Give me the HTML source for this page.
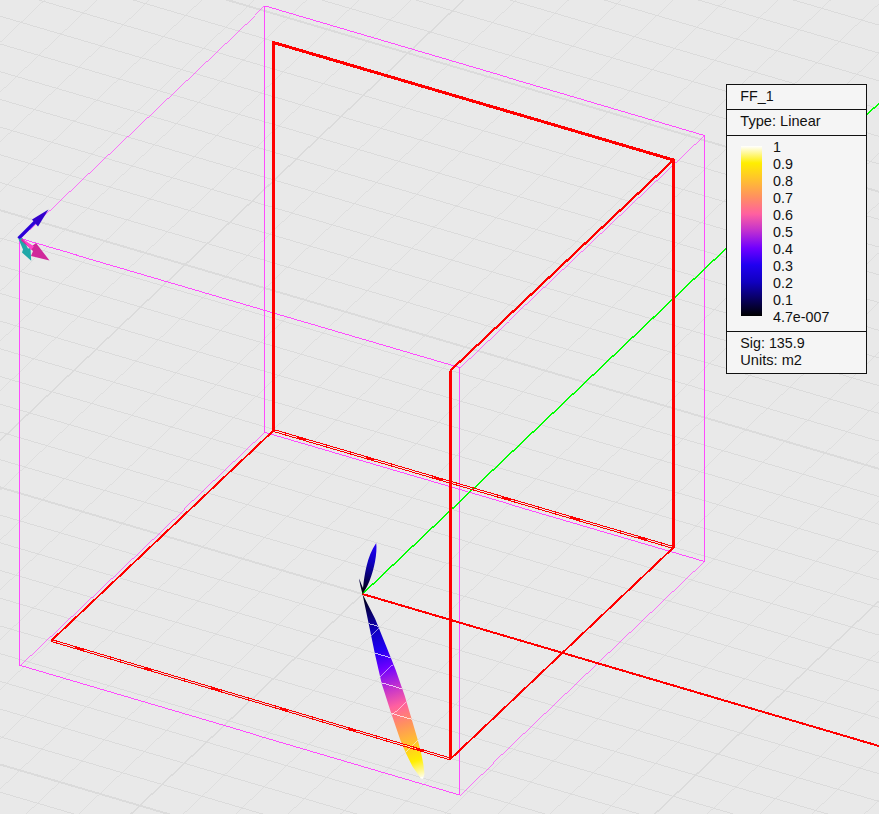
<!DOCTYPE html>
<html><head><meta charset="utf-8"><title>FF_1</title>
<style>
html,body{margin:0;padding:0;background:#e9e9e9;overflow:hidden}
svg{display:block}
text{font-family:"Liberation Sans",sans-serif;font-size:14.3px;fill:#111}
</style></head><body>
<svg width="879" height="814" viewBox="0 0 879 814">
<defs>
<linearGradient id="cb" x1="0" y1="1" x2="0" y2="0"><stop offset="0" stop-color="#000000"/><stop offset="0.1" stop-color="#080060"/><stop offset="0.2" stop-color="#1000c0"/><stop offset="0.3" stop-color="#2000f0"/><stop offset="0.4" stop-color="#7000ff"/><stop offset="0.5" stop-color="#c030d0"/><stop offset="0.6" stop-color="#ff60a0"/><stop offset="0.7" stop-color="#ff9060"/><stop offset="0.8" stop-color="#ffc030"/><stop offset="0.9" stop-color="#ffee00"/><stop offset="1" stop-color="#ffffff"/></linearGradient>
<linearGradient id="lg" gradientUnits="userSpaceOnUse" x1="362.5" y1="594" x2="423" y2="779"><stop offset="0" stop-color="#000000"/><stop offset="0.1" stop-color="#080060"/><stop offset="0.2" stop-color="#1000c0"/><stop offset="0.3" stop-color="#2000f0"/><stop offset="0.4" stop-color="#7000ff"/><stop offset="0.5" stop-color="#c030d0"/><stop offset="0.6" stop-color="#ff60a0"/><stop offset="0.7" stop-color="#ff9060"/><stop offset="0.8" stop-color="#ffc030"/><stop offset="0.9" stop-color="#ffee00"/><stop offset="1" stop-color="#ffffff"/></linearGradient>
<linearGradient id="lg2" gradientUnits="userSpaceOnUse" x1="362.5" y1="594" x2="405" y2="436"><stop offset="0" stop-color="#000000"/><stop offset="0.1" stop-color="#080060"/><stop offset="0.2" stop-color="#1000c0"/><stop offset="0.3" stop-color="#2000f0"/><stop offset="0.4" stop-color="#7000ff"/><stop offset="0.5" stop-color="#c030d0"/><stop offset="0.6" stop-color="#ff60a0"/><stop offset="0.7" stop-color="#ff9060"/><stop offset="0.8" stop-color="#ffc030"/><stop offset="0.9" stop-color="#ffee00"/><stop offset="1" stop-color="#ffffff"/></linearGradient>
<clipPath id="lc"><path d="M362.5 594.0L368.7 623.8L375.1 654.8L381.6 683.2L390.6 711.5L400.5 740.5L406.3 754.0L412.5 766.5L421.0 778.6L423.0 779.0L424.5 774.0L423.3 764.0L420.8 751.5L417.5 739.0L412.5 721.9L404.8 696.1L395.8 670.3L385.5 644.5L375.1 618.7Z"/></clipPath>
</defs>
<rect width="879" height="814" fill="#e9e9e9"/>
<g shape-rendering="crispEdges" fill="none">
<path d="M-5.0 818.4L-3.0 819.0M-5.0 790.7L91.2 819.0M-5.0 735.3L279.5 819.0M-5.0 707.6L373.7 819.0M-5.0 679.9L467.9 819.0M-5.0 652.1L562.1 819.0M-5.0 624.4L656.2 819.0M-5.0 596.7L750.4 819.0M-5.0 569.0L844.6 819.0M-5.0 541.3L884.0 802.9M-5.0 513.6L884.0 775.2M-5.0 458.2L884.0 719.7M-5.0 430.4L884.0 692.0M-5.0 402.7L884.0 664.3M-5.0 375.0L884.0 636.6M-5.0 347.3L884.0 608.9M-5.0 319.6L884.0 581.2M-5.0 291.9L884.0 553.5M-5.0 264.2L884.0 525.7M-5.0 236.4L884.0 498.0M-5.0 181.0L884.0 442.6M-5.0 153.3L884.0 414.9M-5.0 125.6L884.0 387.2M-5.0 97.9L884.0 359.5M-5.0 70.2L884.0 331.8M-5.0 42.5L884.0 304.0M-5.0 14.7L884.0 276.3M22.1 -5.0L884.0 248.6M116.3 -5.0L884.0 220.9M304.6 -5.0L884.0 165.5M398.8 -5.0L884.0 137.8M493.0 -5.0L884.0 110.1M587.2 -5.0L884.0 82.3M681.4 -5.0L884.0 54.6M775.5 -5.0L884.0 26.9M869.7 -5.0L884.0 -0.8" stroke="#dadada" stroke-width="0.96"/>
<path d="M-5.0 -2.6L-2.4 -5.0M-5.0 47.2L49.9 -5.0M-5.0 97.0L102.3 -5.0M-5.0 146.8L154.7 -5.0M-5.0 196.5L207.1 -5.0M-5.0 246.3L259.5 -5.0M-5.0 296.1L311.9 -5.0M-5.0 345.9L364.3 -5.0M-5.0 395.6L416.7 -5.0M-5.0 495.2L521.4 -5.0M-5.0 545.0L573.8 -5.0M-5.0 594.7L626.2 -5.0M-5.0 644.5L678.6 -5.0M-5.0 694.3L731.0 -5.0M-5.0 744.1L783.4 -5.0M-5.0 793.9L835.8 -5.0M20.9 819.0L884.0 -1.1M73.3 819.0L884.0 48.7M178.1 819.0L884.0 148.3M230.5 819.0L884.0 198.0M282.9 819.0L884.0 247.8M335.2 819.0L884.0 297.6M387.6 819.0L884.0 347.4M440.0 819.0L884.0 397.2M492.4 819.0L884.0 446.9M544.8 819.0L884.0 496.7M597.2 819.0L884.0 546.5M702.0 819.0L884.0 646.0M754.3 819.0L884.0 695.8M806.7 819.0L884.0 745.6M859.1 819.0L884.0 795.4" stroke="#dadada" stroke-width="0.72"/>
<path d="M-5.0 763.0L185.3 819.0M-5.0 485.9L362.5 594.0M-5.0 208.7L884.0 470.3M210.4 -5.0L884.0 193.2" stroke="#dbdbdb" stroke-width="1.95"/>
<path d="M-5.0 445.4L469.0 -5.0M125.7 819.0L362.5 594.0M649.6 819.0L884.0 596.3" stroke="#dbdbdb" stroke-width="1.45"/>
<path d="M264.5 6.0L264.5 432.5M704.5 135.5L704.5 561.5M459.5 367.5L459.5 795.0M19.5 238.5L19.5 665.5M264.5 6.0L704.5 135.5M459.5 367.5L19.5 238.5M264.5 432.5L704.5 561.5M459.5 795.0L19.5 665.5" stroke="#ff44ff" stroke-width="0.96"/>
<path d="M704.5 135.5L459.5 367.5M19.5 238.5L264.5 6.0M704.5 561.5L459.5 795.0M19.5 665.5L264.5 432.5" stroke="#ff44ff" stroke-width="0.72"/>
<path d="M362.5 594.0L884.0 98.5" stroke="#00ff00" stroke-width="1.45"/>
<path d="M362.5 594.0L884.0 747.5" stroke="#ff0000" stroke-width="2"/>
</g>
<!-- far field lobes -->
<path d="M362.5 594C361 588 359.6 583 359 578.5C361 583 362 586 363 588C364.5 575 367 556 376.2 543C377.5 553 374 570 369.5 581C367 587 364.5 591 362.5 594Z" fill="url(#lg2)"/>
<path d="M362.5 594.0L368.7 623.8L375.1 654.8L381.6 683.2L390.6 711.5L400.5 740.5L406.3 754.0L412.5 766.5L421.0 778.6L423.0 779.0L424.5 774.0L423.3 764.0L420.8 751.5L417.5 739.0L412.5 721.9L404.8 696.1L395.8 670.3L385.5 644.5L375.1 618.7Z" fill="url(#lg)"/>
<g clip-path="url(#lc)" shape-rendering="crispEdges" fill="none"><path d="M-5.0 818.4L-3.0 819.0M-5.0 790.7L91.2 819.0M-5.0 735.3L279.5 819.0M-5.0 707.6L373.7 819.0M-5.0 679.9L467.9 819.0M-5.0 652.1L562.1 819.0M-5.0 624.4L656.2 819.0M-5.0 596.7L750.4 819.0M-5.0 569.0L844.6 819.0M-5.0 541.3L884.0 802.9M-5.0 513.6L884.0 775.2M-5.0 458.2L884.0 719.7M-5.0 430.4L884.0 692.0M-5.0 402.7L884.0 664.3M-5.0 375.0L884.0 636.6M-5.0 347.3L884.0 608.9M-5.0 319.6L884.0 581.2M-5.0 291.9L884.0 553.5M-5.0 264.2L884.0 525.7M-5.0 236.4L884.0 498.0M-5.0 181.0L884.0 442.6M-5.0 153.3L884.0 414.9M-5.0 125.6L884.0 387.2M-5.0 97.9L884.0 359.5M-5.0 70.2L884.0 331.8M-5.0 42.5L884.0 304.0M-5.0 14.7L884.0 276.3M22.1 -5.0L884.0 248.6M116.3 -5.0L884.0 220.9M304.6 -5.0L884.0 165.5M398.8 -5.0L884.0 137.8M493.0 -5.0L884.0 110.1M587.2 -5.0L884.0 82.3M681.4 -5.0L884.0 54.6M775.5 -5.0L884.0 26.9M869.7 -5.0L884.0 -0.8" stroke="#ffffff" stroke-opacity="0.75" stroke-width="0.96"/><path d="M-5.0 -2.6L-2.4 -5.0M-5.0 47.2L49.9 -5.0M-5.0 97.0L102.3 -5.0M-5.0 146.8L154.7 -5.0M-5.0 196.5L207.1 -5.0M-5.0 246.3L259.5 -5.0M-5.0 296.1L311.9 -5.0M-5.0 345.9L364.3 -5.0M-5.0 395.6L416.7 -5.0M-5.0 495.2L521.4 -5.0M-5.0 545.0L573.8 -5.0M-5.0 594.7L626.2 -5.0M-5.0 644.5L678.6 -5.0M-5.0 694.3L731.0 -5.0M-5.0 744.1L783.4 -5.0M-5.0 793.9L835.8 -5.0M20.9 819.0L884.0 -1.1M73.3 819.0L884.0 48.7M178.1 819.0L884.0 148.3M230.5 819.0L884.0 198.0M282.9 819.0L884.0 247.8M335.2 819.0L884.0 297.6M387.6 819.0L884.0 347.4M440.0 819.0L884.0 397.2M492.4 819.0L884.0 446.9M544.8 819.0L884.0 496.7M597.2 819.0L884.0 546.5M702.0 819.0L884.0 646.0M754.3 819.0L884.0 695.8M806.7 819.0L884.0 745.6M859.1 819.0L884.0 795.4" stroke="#ffffff" stroke-opacity="0.75" stroke-width="0.72"/></g>
<g shape-rendering="crispEdges" fill="none">
<path d="M273.5 430.5L51.5 640.5M450.5 759L673.5 547.5" stroke="#ff0000" stroke-width="1.9"/>
<path d="M673.5 160L450.5 370.5" stroke="#ff0000" stroke-width="2.17"/>
<path d="M273.5 429.5L673.5 546.5M273.5 431.5L673.5 548.5M51.5 639.5L450.5 758M51.5 641.5L450.5 760" stroke="#ff0000" stroke-width="1"/>
<path d="M273.5 430.5L673.5 547.5M51.5 640.5L450.5 759" stroke="#ff0000" stroke-width="1" stroke-dasharray="9 62" stroke-dashoffset="-25"/>
<path d="M273.5 430.5V42.5L673.5 160V547.5M450.5 370.5V759" stroke="#ff0000" stroke-width="3" stroke-linejoin="miter"/>
</g>
<!-- triad -->
<g>
<path d="M18.5 238.5L35.5 221.5" stroke="#2a00d8" stroke-width="3.2" fill="none"/>
<path d="M48.5 209.5L32 219.5L38 226.5Z" fill="#3300cc"/>
<path d="M18.5 239L23 249.5L22 252.5L31.2 260.8L30.5 248L28 248.5L22.5 238Z" fill="#20a8a8"/>
<path d="M22 238.5L32 246L36 243L49.5 260.5L31 256L33 251L21 240.5Z" fill="#d0289a"/>
<path d="M22 238.5L34 246.5L31 250Z" fill="#ff44cc"/>
</g>
<!-- legend -->
<g>
<rect x="726.5" y="84.5" width="140" height="289" fill="#f5f5f5" stroke="#111" stroke-width="1" shape-rendering="crispEdges"/>
<path d="M726 109.5H867M726 135.5H867M726 331.5H867" stroke="#111" stroke-width="1" shape-rendering="crispEdges"/>
<rect x="741" y="146" width="21" height="170" fill="url(#cb)"/>
<text x="740.3" y="101">FF_1</text>
<text x="740.3" y="126.4" style="font-size:14.6px">Type: Linear</text>
<text x="773" y="152.4">1</text><text x="773" y="169.4">0.9</text><text x="773" y="186.4">0.8</text><text x="773" y="203.4">0.7</text><text x="773" y="220.4">0.6</text><text x="773" y="237.4">0.5</text><text x="773" y="254.4">0.4</text><text x="773" y="271.4">0.3</text><text x="773" y="288.4">0.2</text><text x="773" y="305.4">0.1</text><text x="773" y="322.4">4.7e-007</text>
<text x="740.3" y="347.6">Sig: 135.9</text>
<text x="740.3" y="364.5" style="font-size:14.6px">Units: m2</text>
</g>
</svg>
</body></html>
